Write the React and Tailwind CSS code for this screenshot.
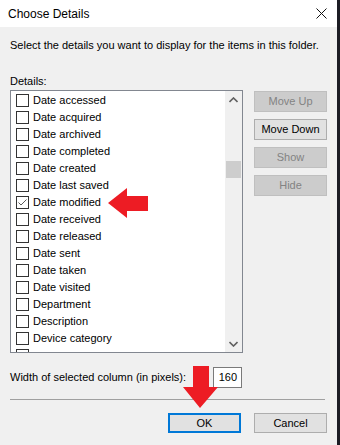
import React from "react";

const items = [
  ["Date accessed", false],
  ["Date acquired", false],
  ["Date archived", false],
  ["Date completed", false],
  ["Date created", false],
  ["Date last saved", false],
  ["Date modified", true],
  ["Date received", false],
  ["Date released", false],
  ["Date sent", false],
  ["Date taken", false],
  ["Date visited", false],
  ["Department", false],
  ["Description", false],
  ["Device category", false],
  ["", false],
];

function Check({ checked }) {
  return (
    <div className="w-[13px] h-[13px] border border-[#333333] bg-white shrink-0 flex items-center justify-center">
      {checked && (
        <svg width="11" height="11" viewBox="0 0 11 11">
          <path d="M1.5 5.5 L4 8 L9.5 2.5" fill="none" stroke="#5a5a5a" strokeWidth="1" />
        </svg>
      )}
    </div>
  );
}

function Btn({ children, disabled }) {
  return (
    <div
      className={
        "w-[73px] h-[21px] flex items-center justify-center border text-[11px] " +
        (disabled
          ? "bg-[#cccccc] border-[#bfbfbf] text-[#838383]"
          : "bg-[#e1e1e1] border-[#adadad] text-black")
      }
    >
      {children}
    </div>
  );
}

export default function App() {
  return (
    <div
      className="relative w-[340px] h-[445px] flex bg-[#f0f0f0] overflow-hidden whitespace-nowrap"
      style={{ fontFamily: '"Liberation Sans", Arial, sans-serif' }}
    >
      <div className="w-[337px] flex flex-col">
        <div className="h-[27px] bg-white flex items-center justify-between pl-[8px] pr-[10px]">
          <span className="text-[12px] text-black leading-none">Choose Details</span>
          <svg width="11" height="11" viewBox="0 0 11 11">
            <path d="M0.5 0.5 L10.5 10.5 M10.5 0.5 L0.5 10.5" stroke="#111" strokeWidth="1" />
          </svg>
        </div>
        <div className="pl-[10px] pt-[10px] text-[11px] leading-[16px] text-black">
          Select the details you want to display for the items in this folder.
        </div>
        <div className="pl-[10px] pt-[20px] text-[11px] leading-[16px] text-black">Details:</div>
        <div className="flex pl-[10px] pt-[1px] gap-[11px]">
          <div className="w-[233px] h-[263px] border border-[#828790] bg-white flex overflow-hidden">
            <div className="flex-1 pt-[1px] pl-[5px] overflow-hidden">
              {items.map(([label, checked], i) => (
                <div key={i} className="h-[17px] flex items-center gap-[4px]">
                  <Check checked={checked} />
                  {label && <span className="text-[11px] leading-none text-black">{label}</span>}
                </div>
              ))}
            </div>
            <div className="w-[17px] bg-[#f0f0f0] flex flex-col items-center">
              <div className="h-[17px] flex items-center justify-center">
                <svg width="9" height="6" viewBox="0 0 9 6">
                  <path d="M0.5 5 L4.5 1 L8.5 5" fill="none" stroke="#606060" strokeWidth="1.6" />
                </svg>
              </div>
              <div className="mt-[53px] w-[15px] h-[17px] bg-[#cdcdcd]" />
              <div className="flex-1" />
              <div className="h-[17px] flex items-center justify-center">
                <svg width="9" height="6" viewBox="0 0 9 6">
                  <path d="M0.5 1 L4.5 5 L8.5 1" fill="none" stroke="#606060" strokeWidth="1.6" />
                </svg>
              </div>
            </div>
          </div>
          <div className="flex flex-col pt-[1px] gap-[7px]">
            <Btn disabled>Move Up</Btn>
            <Btn>Move Down</Btn>
            <Btn disabled>Show</Btn>
            <Btn disabled>Hide</Btn>
          </div>
        </div>
        <div className="flex items-center pl-[10px] pt-[14px]">
          <span className="text-[11px] leading-none text-black w-[203px]">
            Width of selected column (in pixels):
          </span>
          <div className="w-[29px] h-[21px] bg-white border border-[#7a7a7a] flex items-center justify-end pr-[4px] text-[11px] text-black">
            160
          </div>
        </div>
        <div className="ml-[10px] mt-[11px] w-[315px] h-px bg-[#a0a0a0]" />
        <div className="flex pl-[168px] pt-[13px] gap-[13px]">
          <div className="w-[73px] h-[20px] flex items-center justify-center border-2 border-[#0078d7] bg-[#e1e1e1] text-[11px] text-black">
            OK
          </div>
          <div className="w-[73px] h-[20px] flex items-center justify-center border border-[#adadad] bg-[#e1e1e1] text-[11px] text-black">
            Cancel
          </div>
        </div>
      </div>
      <div className="w-[3px] h-full bg-[#1c1c24]" />

      <svg className="absolute left-[106px] top-[186px]" width="44" height="34" viewBox="0 0 44 34">
        <polygon points="2,17 21,2 21,10 42,10 42,25 21,25 21,32" fill="#ed1c24" />
      </svg>
      <svg className="absolute left-[181px] top-[364px]" width="40" height="46" viewBox="0 0 40 46">
        <polygon points="12,2 28,2 28,23 37,23 19,44 2,23 12,23" fill="#ed1c24" />
      </svg>
    </div>
  );
}
